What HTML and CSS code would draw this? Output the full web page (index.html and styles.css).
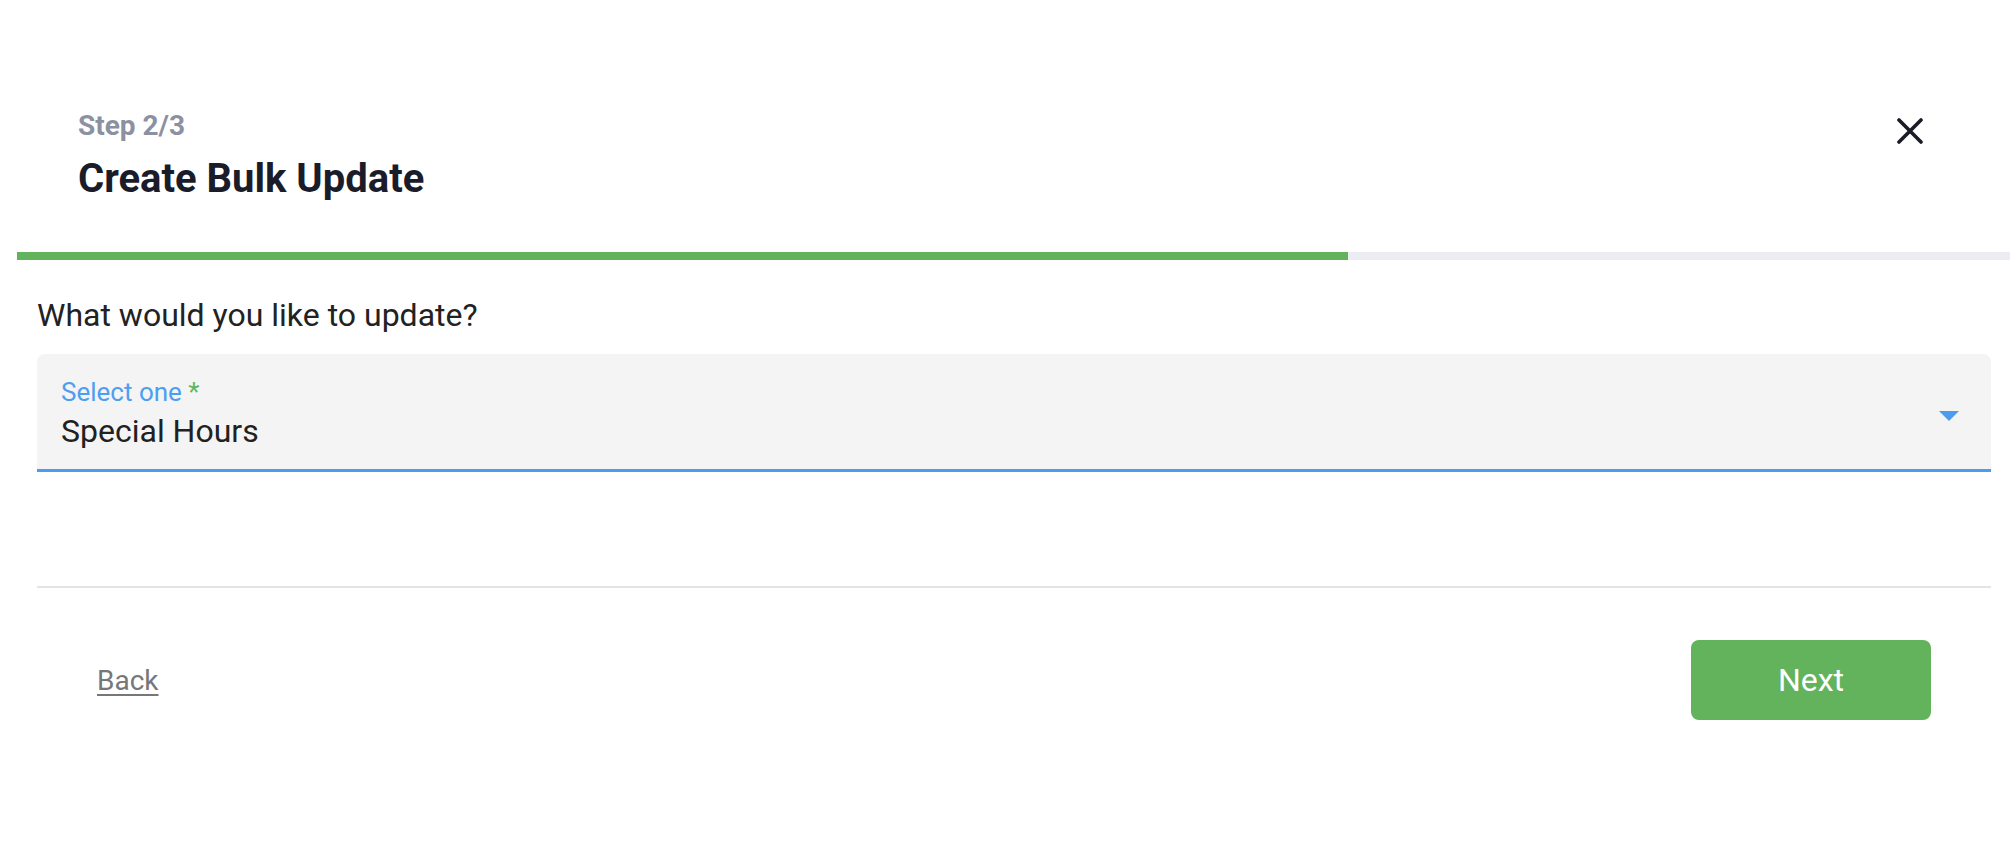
FILE: index.html
```html
<!DOCTYPE html>
<html lang="en">
<head>
    <meta charset="UTF-8">
    <meta name="viewport" content="width=device-width, initial-scale=1.0">
    <title>Create Bulk Update</title>
    <link rel="stylesheet" href="styles.css">
</head>
<body>
    <div class="modal">
        <div class="modal-header">
            <div class="titles">
                <div class="step">Step 2/3</div>
                <h2 class="title">Create Bulk Update</h2>
            </div>
            <button type="button" class="close-btn" aria-label="Close">
                <svg width="26" height="26" viewBox="0 0 26 26">
                    <path d="M2 2 L24 24 M24 2 L2 24" stroke="#1a1b26" stroke-width="3.6" stroke-linecap="round" fill="none"/>
                </svg>
            </button>
        </div>

        <div class="progress">
            <div class="progress-fill"></div>
        </div>

        <div class="modal-body">
            <p class="question">What would you like to update?</p>
            <div class="select-field">
                <div class="select-text">
                    <div class="select-label">Select one <span class="required">*</span></div>
                    <div class="select-value">Special Hours</div>
                </div>
                <span class="select-arrow"></span>
            </div>
            <div class="divider"></div>
            <div class="modal-footer">
                <a href="#" class="back-link">Back</a>
                <button type="button" class="next-btn">Next</button>
            </div>
        </div>
    </div>
</body>
</html>
```

FILE: styles.css
```css
body {
    margin: 0;
    font-family: Roboto, "Liberation Sans", Arial, sans-serif;
    background: #ffffff;
    color: #222222;
}
.modal {
    margin-left: 17px;
    padding-top: 110px;
}
.modal-header {
    display: flex;
    justify-content: space-between;
    align-items: flex-start;
    padding: 0 87px 0 61px;
}
.step {
    font-size: 28px;
    line-height: 32px;
    font-weight: 700;
    color: #8c91a2;
}
.title {
    margin: 13px 0 0;
    font-size: 40px;
    line-height: 48px;
    font-weight: 700;
    color: #1b1c29;
}
.close-btn {
    margin-top: 8px;
    padding: 0;
    border: none;
    background: none;
    cursor: pointer;
    line-height: 0;
}
.progress {
    margin-top: 49px;
    height: 8px;
    background: #ecedf2;
}
.progress-fill {
    width: 66.8%;
    height: 100%;
    background: #62b35b;
}
.modal-body {
    padding: 0 19px 0 20px;
}
.question {
    margin: 31px 0 15px;
    font-size: 32px;
    line-height: 48px;
    color: #222222;
}
.select-field {
    display: flex;
    align-items: center;
    padding: 23px 32px 18px 24px;
    background: #f4f4f4;
    border-radius: 8px 8px 0 0;
    border-bottom: 3px solid #4b9bef;
}
.select-text {
    flex: 1;
}
.select-label {
    font-size: 26px;
    line-height: 30px;
    color: #4d9ef0;
}
.required {
    color: #5cb85c;
}
.select-value {
    margin-top: 4px;
    font-size: 32px;
    line-height: 40px;
    color: #212121;
}
.select-arrow {
    width: 0;
    height: 0;
    border-left: 10px solid transparent;
    border-right: 10px solid transparent;
    border-top: 10px solid #4b9bef;
    margin-top: 4px;
}
.divider {
    margin-top: 114px;
    height: 2px;
    background: #e4e4e4;
}
.modal-footer {
    display: flex;
    justify-content: space-between;
    align-items: center;
    margin-top: 52px;
    padding: 0 60px;
}
.back-link {
    font-size: 28px;
    color: #777777;
    text-decoration: underline;
    text-underline-offset: 4px;
}
.next-btn {
    width: 240px;
    height: 80px;
    border: none;
    border-radius: 8px;
    background: #62b35b;
    color: #ffffff;
    font-family: Roboto, "Liberation Sans", Arial, sans-serif;
    font-size: 32px;
    cursor: pointer;
}
```
